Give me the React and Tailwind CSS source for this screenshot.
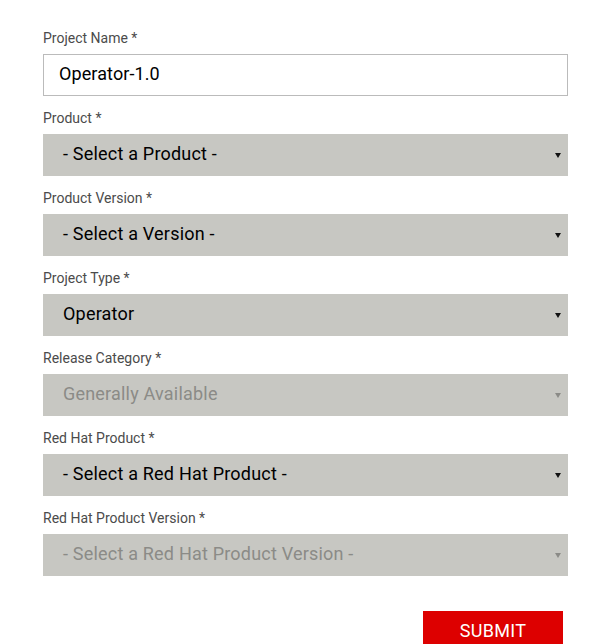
export default function App() {
  const fields = [
    { label: "Project Name *", value: "Operator-1.0", type: "input" },
    { label: "Product *", value: "- Select a Product -" },
    { label: "Product Version *", value: "- Select a Version -" },
    { label: "Project Type *", value: "Operator" },
    { label: "Release Category *", value: "Generally Available", disabled: true },
    { label: "Red Hat Product *", value: "- Select a Red Hat Product -" },
    { label: "Red Hat Product Version *", value: "- Select a Red Hat Product Version -", disabled: true },
  ];
  return (
    <div className="w-[595px] h-[644px] overflow-hidden bg-white pt-[28px] px-[43px] pr-[27px]" style={{ fontFamily: "Roboto, 'Noto Sans', sans-serif" }}>
      {fields.map((f, i) => (
        <div key={i} className="mb-[12px]">
          <div className="text-[14px] leading-[20px] text-[#4b4b4b] mb-[6px]">{f.label}</div>
          {f.type === "input" ? (
            <div className="h-[42px] border border-[#bbbbbb] flex items-center px-[15px] pb-[3px] text-[18px] tracking-[0.1px] text-black">{f.value}</div>
          ) : (
            <div className="h-[42px] bg-[#c7c7c2] flex items-center justify-between pl-[20px] pr-[7px]">
              <span className={`text-[18px] tracking-[0.2px] pb-[4px] ${f.disabled ? "text-[#8b8b87]" : "text-black"}`}>{f.value}</span>
              <svg width="6" height="6" viewBox="0 0 6 6">
                <path d="M0 1 L6 1 L3 6 Z" fill={f.disabled ? "#8b8b87" : "#111"} />
              </svg>
            </div>
          )}
        </div>
      ))}
      <div className="flex justify-end pr-[5px] pt-[23px]">
        <div className="w-[140px] h-[40px] bg-[#dd0000] text-white text-[18px] tracking-[0.3px] flex items-start justify-center pt-[6px]">SUBMIT</div>
      </div>
    </div>
  );
}
